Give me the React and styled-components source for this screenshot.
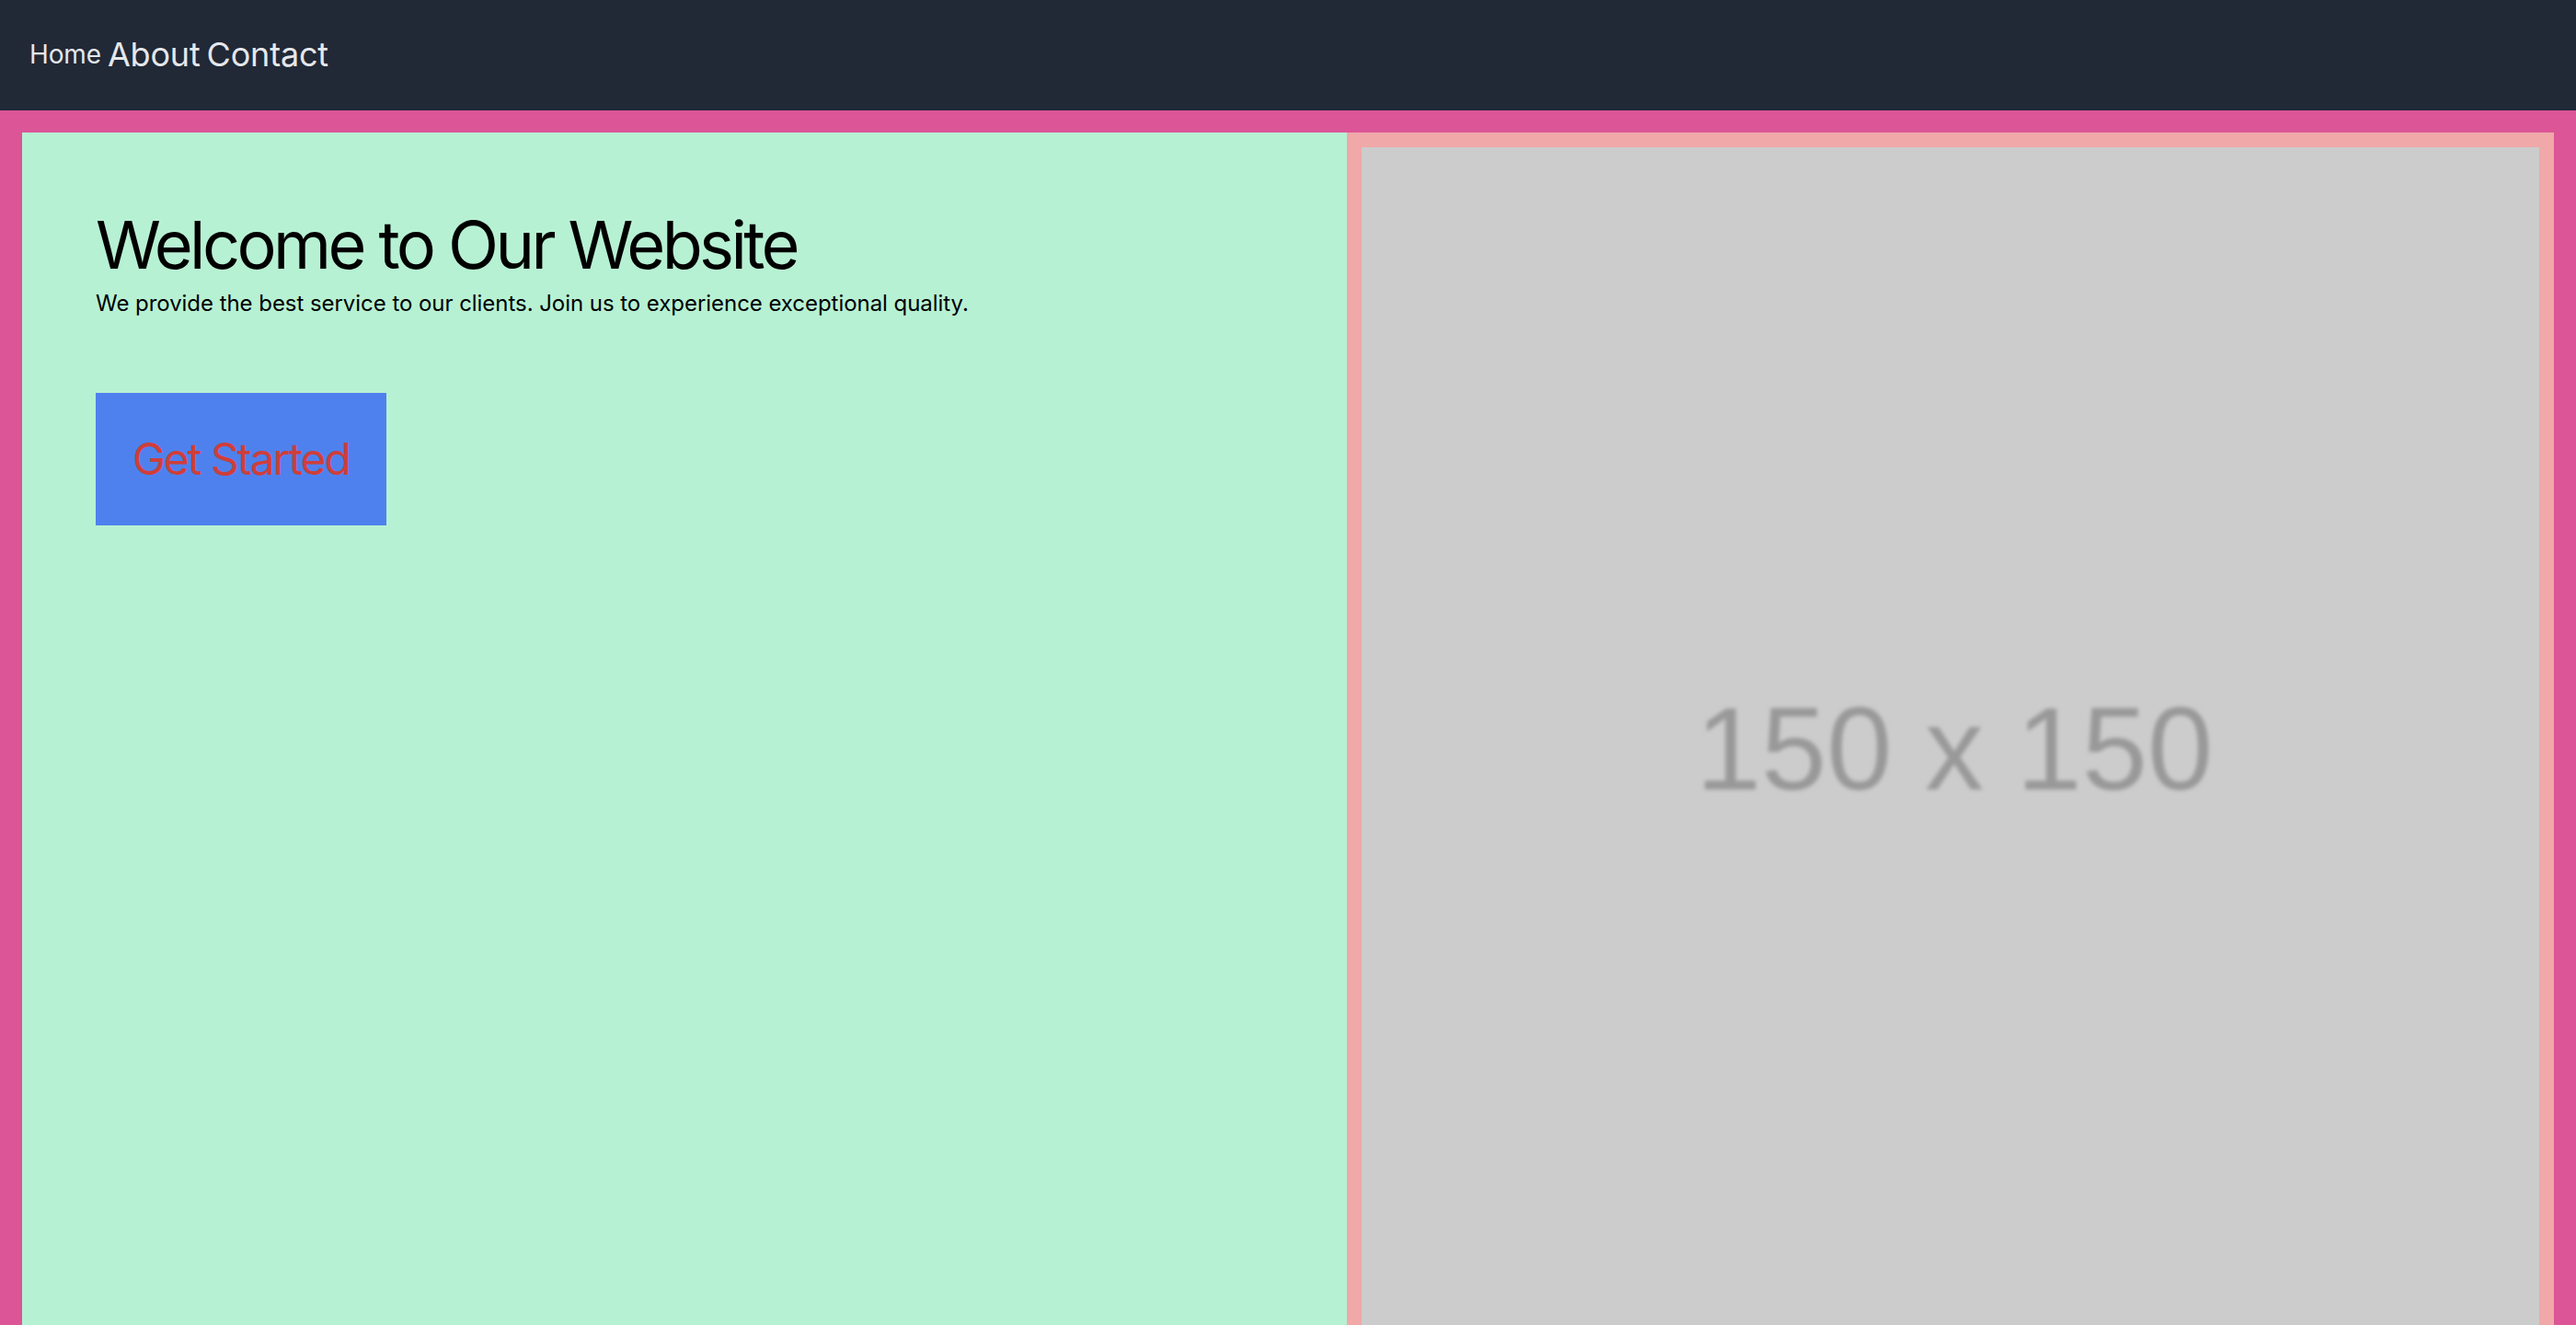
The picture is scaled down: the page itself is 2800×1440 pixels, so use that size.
import React from "react";
import styled, { createGlobalStyle } from "styled-components";

const GlobalStyle = createGlobalStyle`
  html, body {
    margin: 0;
    padding: 0;
  }
  body {
    font-family: Inter, "Noto Sans", sans-serif;
    background-color: #db5597;
  }
`;

const navLinks = [
  { label: "Home", size: 28 },
  { label: "About", size: 36 },
  { label: "Contact", size: 36 },
];

export default function App() {
  return (
    <>
      <GlobalStyle />
      <Navbar>
        {navLinks.map((link) => (
          <NavLink key={link.label} href="#" $size={link.size}>
            {link.label}
          </NavLink>
        ))}
      </Navbar>
      <Page>
        <Hero>
          <Intro>
            <Title>Welcome to Our Website</Title>
            <Lead>
              We provide the best service to our clients. Join us to experience
              exceptional quality.
            </Lead>
            <CtaButton>Get Started</CtaButton>
          </Intro>
          <Frame>
            <Placeholder viewBox="0 0 150 150" role="img" aria-label="150 x 150">
              <defs>
                <filter id="soft" x="-10%" y="-10%" width="120%" height="120%">
                  <feGaussianBlur stdDeviation="0.28" />
                </filter>
              </defs>
              <rect width="150" height="150" fill="#cccccc" />
              <text
                x="75.5"
                y="81.8"
                textAnchor="middle"
                fontFamily="'Liberation Sans', Arial, sans-serif"
                fontSize="15"
                fill="#999999"
                filter="url(#soft)"
              >
                150 x 150
              </text>
            </Placeholder>
          </Frame>
        </Hero>
      </Page>
    </>
  );
}

const Navbar = styled.nav`
  display: flex;
  align-items: center;
  gap: 7px;
  height: 120px;
  padding: 0 32px;
  box-sizing: border-box;
  background-color: #212836;
`;

const NavLink = styled.a`
  color: #e5e7eb;
  text-decoration: none;
  font-size: ${(p) => p.$size}px;
  letter-spacing: -0.005em;
  line-height: 1.2;
`;

const Page = styled.main`
  padding: 24px;
  background-color: #db5597;
`;

const Hero = styled.section`
  display: flex;
`;

const Intro = styled.div`
  flex: 1;
  display: flex;
  flex-direction: column;
  align-items: flex-start;
  padding: 78px 80px 80px;
  background-color: #b7f1d3;
`;

const Title = styled.h1`
  margin: 0;
  font-size: 72px;
  font-weight: 400;
  letter-spacing: -0.05em;
  line-height: 1.21;
  color: #000;
`;

const Lead = styled.p`
  margin: 6px 0 0;
  font-size: 24px;
  letter-spacing: -0.002em;
  line-height: 1.21;
  color: #000;
`;

const CtaButton = styled.button`
  margin-top: 83px;
  padding: 40px;
  border: none;
  background-color: #4f81ee;
  color: #cf3e3a;
  font-family: inherit;
  font-size: 48px;
  letter-spacing: -0.042em;
  line-height: 64px;
  cursor: pointer;
`;

const Frame = styled.div`
  padding: 16px;
  background-color: #f0a8a8;
`;

const Placeholder = styled.svg`
  display: block;
  width: 1280px;
  height: 1280px;
`;
